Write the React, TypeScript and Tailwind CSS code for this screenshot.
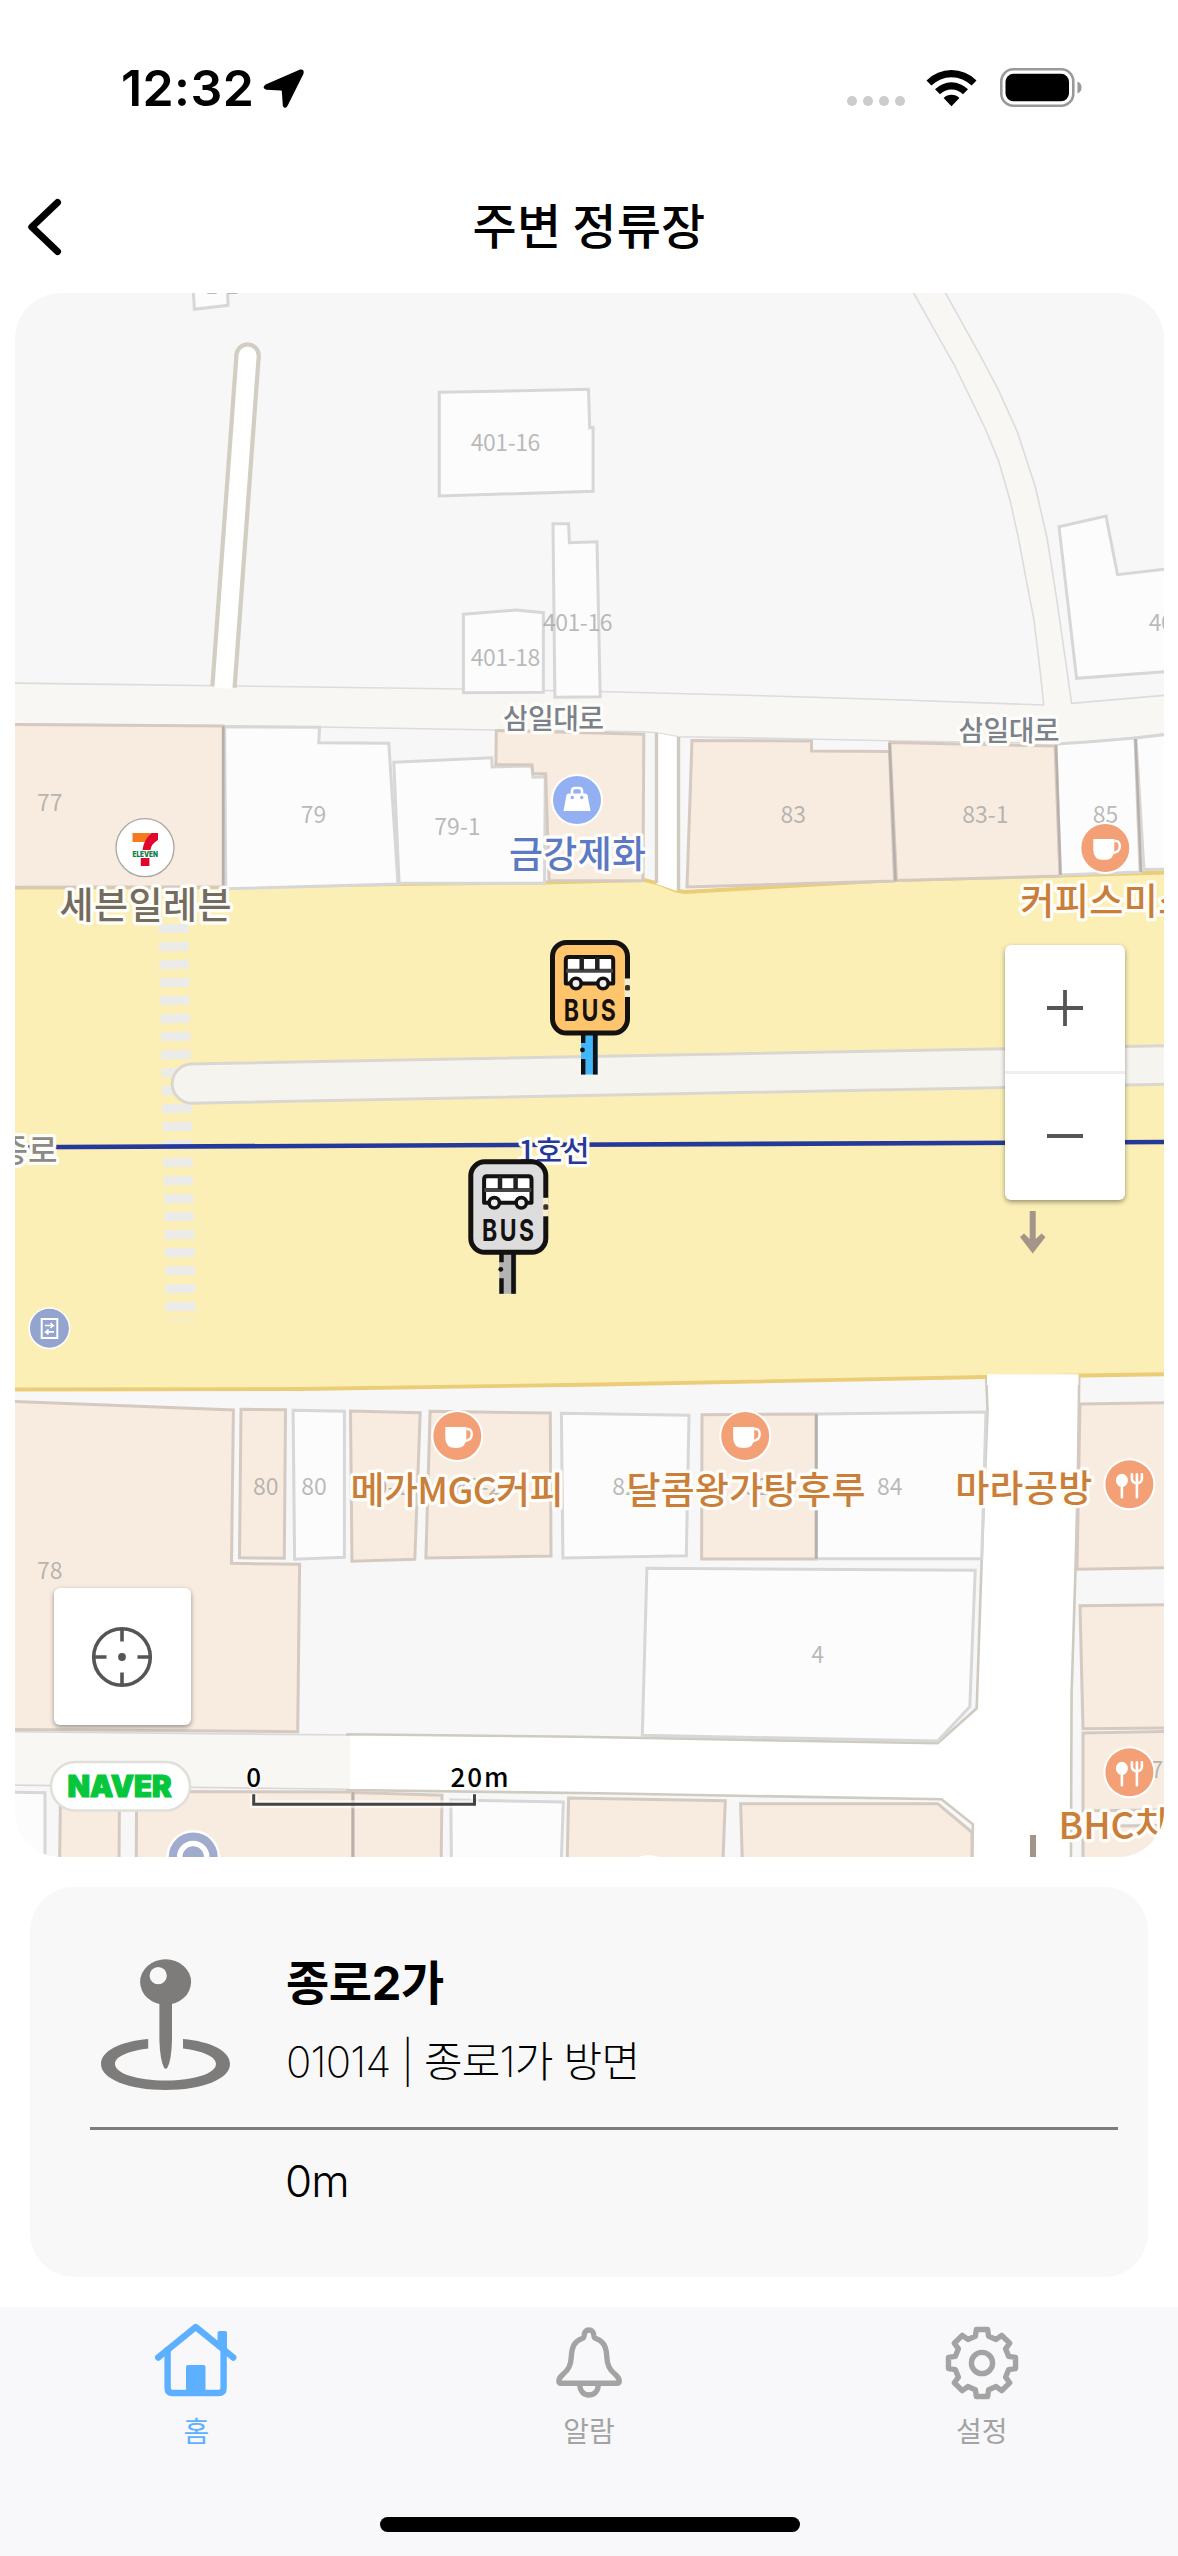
import React from "react";

const KR = '"Noto Sans CJK KR", "Noto Sans", sans-serif';

type LotKind = "shop" | "plain";

const lots: { kind: LotKind; pts: string }[] = [
  { kind: "plain", pts: "193,285 194.4,309.3 228,305.3 227.5,285" },
  { kind: "plain", pts: "439.3,392.3 588.5,389.3 589.7,428 593.1,427.3 593.1,491.3 439.3,496" },
  { kind: "plain", pts: "553,523.7 568.6,523.7 569.4,542.7 597,541.7 600.2,696.7 554.9,697.3" },
  { kind: "plain", pts: "463.4,614.3 516.2,610 543.4,612.7 543.4,692.3 463.4,692.7" },
  { kind: "plain", pts: "1059,526.7 1106,516 1117.5,574.7 1180,567.5 1180,670.5 1076.6,678.3" },
  { kind: "shop", pts: "5,724.5 223.1,726 223.1,886.7 5,887.3" },
  { kind: "plain", pts: "224.6,726.7 319.5,727.3 318.8,742.7 388.8,743.3 398,884 225.8,888.7" },
  { kind: "plain", pts: "393.8,762.3 491.7,757.7 492.1,767 531.9,766 533,777.3 545.3,776.7 544.5,883.3 399.1,883.3" },
  { kind: "shop", pts: "496.3,730.5 643.8,734.3 643,880.7 549.1,880.7 545.7,773.7 533,773.7 531.9,764.7 495.9,764.7" },
  { kind: "shop", pts: "692,740.5 811.5,741 811.5,751 889.5,751.5 894.5,881 687,887" },
  { kind: "shop", pts: "889.9,742.5 1055,746 1060,876 896.5,880.5" },
  { kind: "plain", pts: "1056,744 1086.9,742 1135,738 1140,872 1060.5,875" },
  { kind: "plain", pts: "1136,738 1180,733 1180,869 1144,869.5" },
  { kind: "shop", pts: "5,1401 233.4,1410 231.5,1563.3 299.6,1564.3 297.7,1731.7 5,1729.3" },
  { kind: "shop", pts: "241,1409.3 285.5,1409.7 284.3,1558.3 239.5,1557.7" },
  { kind: "plain", pts: "293.1,1410.3 344.4,1411.3 344.4,1557.3 294.6,1559.3" },
  { kind: "shop", pts: "350.5,1411 420.2,1412.7 414.8,1559.3 352,1561.3" },
  { kind: "shop", pts: "430.1,1411.3 550.3,1413 551,1556 425.9,1558" },
  { kind: "plain", pts: "561.4,1413.3 689,1415.3 686.3,1555.7 562.9,1558" },
  { kind: "shop", pts: "702,1414.7 816,1414 816,1559 701.6,1559" },
  { kind: "plain", pts: "816.5,1414 986,1412 981.7,1558.7 816.5,1558.7" },
  { kind: "plain", pts: "646.9,1568.3 975.2,1570.3 969.8,1706.7 937.7,1741 642.3,1735.3" },
  { kind: "shop", pts: "1080,1404 1180,1402.5 1180,1567.5 1077,1569.3" },
  { kind: "shop", pts: "1080,1605.7 1180,1604.5 1180,1728 1083,1728.7" },
  { kind: "shop", pts: "1083,1733 1180,1731.3 1180,1810 1083,1810.7" },
  { kind: "shop", pts: "1083,1826.5 1180,1825 1180,1870 1083,1870" },
  { kind: "plain", pts: "5,1792 45,1792.7 45,1870 5,1870" },
  { kind: "shop", pts: "60.5,1793 119.5,1793 119,1870 59.5,1870" },
  { kind: "shop", pts: "136.6,1791.5 352.5,1792 352.5,1870 136.2,1870" },
  { kind: "shop", pts: "353,1792.5 442,1795.3 441,1870 353,1870" },
  { kind: "plain", pts: "450.8,1800 563.3,1802 561,1870 451.5,1870" },
  { kind: "shop", pts: "568.6,1798 725.3,1800.7 722.6,1870 567,1870" },
  { kind: "shop", pts: "740.6,1803.7 937.7,1803.7 972,1832.3 972,1870 742.6,1870" },
];

const lotNumbers: [string, number, number][] = [
  ["401-16", 505.5, 442.5],
  ["401-16", 577.7, 622.5],
  ["401-18", 505.5, 658],
  ["401-15", 1183.5, 622.5],
  ["77", 49.7, 802.3],
  ["79", 313.6, 814.3],
  ["79-1", 457.5, 826.3],
  ["83", 793.3, 814.3],
  ["83-1", 985.3, 814.3],
  ["85", 1105.5, 814.3],
  ["80", 265.8, 1486.6],
  ["80", 314, 1486.6],
  ["80-1", 385, 1486.6],
  ["80-2", 478, 1486.6],
  ["82", 625, 1486.6],
  ["82", 757, 1486.6],
  ["84", 889.7, 1486.6],
  ["4", 817.7, 1654.8],
  ["78", 49.7, 1570.8],
  ["7", 1157, 1770],
];

interface LabelProps {
  x: number;
  y: number;
  color: string;
  size?: number;
  width?: number;
  anchor?: "start" | "middle" | "end";
  children: string;
}

/* Place name with a white halo, centred vertically on y. */
function Label({ x, y, color, size = 37, width, anchor = "middle", children }: LabelProps) {
  return (
    <text
      x={x}
      y={y + size * 0.385}
      fontSize={size}
      fontWeight={500}
      textAnchor={anchor}
      textLength={width}
      fill={color}
      stroke="#fffdf9"
      strokeWidth={6.5}
      strokeLinejoin="round"
      paintOrder="stroke"
    >
      {children}
    </text>
  );
}

function CafePoi({ x, y }: { x: number; y: number }) {
  return (
    <g transform={`translate(${x} ${y})`}>
      <circle r="26" fill="#fff" />
      <circle r="24" fill="#f4a077" />
      <path d="M-12-9H9V2Q9 12-1.500 12Q-12 12-12 2Z" fill="#fff" />
      <path d="M9-7h1.500q4 0 4 5.500t-7 6.500" fill="none" stroke="#fff" strokeWidth="2.400" />
    </g>
  );
}

function FoodPoi({ x, y }: { x: number; y: number }) {
  return (
    <g transform={`translate(${x} ${y})`}>
      <circle r="26" fill="#fff" />
      <circle r="24" fill="#f4a077" />
      <ellipse cx="-7.500" cy="-4" rx="6" ry="6.500" fill="#fff" />
      <path
        d="M-7.500 0V13M7.500-3V13M2.500-10V-5Q3.500-1 7.500-1T12.500-5V-10M7.500-10V-2"
        fill="none"
        stroke="#fff"
        strokeWidth="2.600"
        strokeLinecap="round"
      />
    </g>
  );
}

function BusSign({ x, y, plate, pole }: { x: number; y: number; plate: string; pole: string }) {
  return (
    <g transform={`translate(${x} ${y})`}>
      <rect x="31" y="93" width="17" height="41.500" fill={pole} />
      <path d="M45.200 93V134.500" stroke="#111" strokeWidth="4.600" />
      <path d="M33.200 93V103M33.200 119V134.500" stroke="#111" strokeWidth="4.400" />
      <circle cx="32.500" cy="110" r="2.400" fill="#111" />
      <rect x="2.500" y="2.500" width="75" height="90.500" rx="14" fill={plate} stroke="#141210" strokeWidth="5" />
      <rect x="74.500" y="38.500" width="6" height="18.500" fill="#f7eccb" />
      <rect x="75" y="45" width="5" height="5.500" rx="1.500" fill="#38342c" />
      <path
        d="M15.800 43.500V20Q15.800 17 18.800 17H60.200Q63.200 17 63.200 20V43.500Z"
        fill="#fff"
        stroke="#141210"
        strokeWidth="4"
        strokeLinejoin="round"
      />
      <path d="M16 30.800H63" stroke="#444" strokeWidth="4" />
      <path d="M31.700 17V30M47.300 17V30" stroke="#222" strokeWidth="4.500" />
      <circle cx="26" cy="43.500" r="5.200" fill="#eee" stroke="#141210" strokeWidth="3.600" />
      <circle cx="53" cy="43.500" r="5.200" fill="#eee" stroke="#141210" strokeWidth="3.600" />
      <text
        transform="translate(39.800 81.300) scale(0.78 1)"
        textAnchor="middle"
        fontSize="29.500"
        fontWeight="700"
        fontFamily="Inter, sans-serif"
        letterSpacing="3.200"
        dx="1.600"
        fill="#141210"
      >
        BUS
      </text>
    </g>
  );
}

const UPPER_STREET =
  "M5 683L463 689L608 691.700L771 696L903 700L1043.700 705C1041 675 1037 646 1034 620L1026.900 583.300L1018.100 536.700L1010.400 501.700L998.900 461.700L985.900 430L954.900 366L908 283H940L983.600 361.700L998.900 391L1017.300 431.700L1035.300 486.700L1046.800 536.700L1056.300 596.700L1064 650L1071.600 703.300L1180 694V732L1134.800 737.300L1086.900 741.700L1056.300 743.300L890 740.700L772 738.300L678.300 736.700L656.400 732.700L643.800 731.700L496 730L319.500 727L223 725.700L5 723.700Z";

const MAIN_ROAD =
  "M5 887.500L223 887.300L398 884L545 882.500L643.800 880L657.600 883.300L676.300 890.700L685 892L895.600 880L1060 875.700L1180 872V1374L985 1377L600 1384.500L300 1389L5 1389.500Z";

const SIDE_STREET =
  "M985.900 1370L987.500 1410L981.700 1560L976.700 1708.300L937.700 1743.300L578 1736.700L347.500 1734.300V1790L600 1793.300L941.500 1799.300L972.900 1824.300L972 1870H1070.900L1071.600 1693L1075.500 1570L1077.800 1480L1079.300 1370Z";

function StreetMap() {
  return (
    <svg viewBox="15 293 1149 1564" className="block h-[1564px] w-[1149px]" fontFamily={KR}>
      <rect x="15" y="293" width="1149" height="1564" fill="#f7f7f7" />

      <path d={UPPER_STREET} fill="#f8f7f3" stroke="#dcdcdc" strokeWidth="1.600" />
      <path d="M5 1731.700L350 1735V1789.300L5 1785Z" fill="#f8f7f3" stroke="#d9d9d9" strokeWidth="1.600" />
      <path d="M247.600 355.600L223.500 687" stroke="#d3cec4" strokeWidth="26.500" />
      <circle cx="247.600" cy="355.600" r="13.250" fill="#d3cec4" />
      <path d="M247.600 355.600L223.400 688" stroke="#fff" strokeWidth="18" />
      <circle cx="247.600" cy="355.600" r="9" fill="#fff" />

      <path d={SIDE_STREET} fill="#fff" stroke="#d0cbc1" strokeWidth="2.600" />
      <path d="M345 1736V1788.500H352V1736Z" fill="#fff" />
      <path d="M344 1736.500H350V1788H344Z" fill="#f8f7f3" />
      <path d={MAIN_ROAD} fill="#fcefb5" stroke="#ebcd78" strokeWidth="3.800" />
      <path d="M656.500 733V884L677 891V737Z" fill="#fff" />
      <path d="M656.500 733V883M678.500 737V890" stroke="#d0cbc1" strokeWidth="3.400" />
      <path d="M987 1374.300H1078.500V1385H987Z" fill="#fff" />

      {lots.map((lot, i) => (
        <polygon
          key={i}
          points={lot.pts}
          fill={lot.kind === "shop" ? "#f8ece1" : "#fcfcfc"}
          stroke={lot.kind === "shop" ? "#d5cac1" : "#d7d7d7"}
          strokeWidth="3"
        />
      ))}
      <path
        d="M223.300 726V887M816.300 1414V1559M353 1792V1870M889.500 743L895.500 881M1056 745L1060.500 875M1135.500 739L1141 872"
        stroke="#b8b0ab"
        strokeWidth="2.600"
        fill="none"
      />

      <path d="M173.500 924L181 1321" stroke="#ebebea" strokeWidth="29.500" strokeDasharray="9 9" />
      <path d="M1180 1045.400L190.500 1064A19.700 19.700 0 0 0 190.500 1103.300L1180 1084Z" fill="#f5f4ef" stroke="#dad7d1" strokeWidth="3" />
      <path d="M5 1147.300L1180 1142" stroke="#25399b" strokeWidth="4.600" />
      <path d="M1029.700 1211H1035.700V1239L1041.500 1233.500L1045.500 1237L1032.700 1253.500L1020 1237L1024 1233.500L1029.700 1239Z" fill="#a39589" />
      <rect x="1030" y="1835" width="6" height="30" fill="#a39589" />

      <g fontSize="23" textAnchor="middle" fill="#8c8c8c" fillOpacity="0.6">
        {lotNumbers.map(([n, x, y], i) => (
          <text key={i} x={x} y={y + 8.3} textLength={n.length === 6 ? 69.5 : undefined}>
            {n}
          </text>
        ))}
        <text x="222" y="293.500">1-1</text>
      </g>

      <Label x={553.5} y={718} size={28} width={101} color="#7b828b">삼일대로</Label>
      <Label x={1009} y={730.5} size={28} width={101} color="#7b828b">삼일대로</Label>
      <Label x={57.5} y={1149.5} size={32} anchor="end" color="#8a8a86">종로</Label>
      <Label x={554} y={1151} size={29} width={71} color="#25399b">1호선</Label>

      <circle cx="577" cy="800" r="26" fill="#fff" />
      <circle cx="577" cy="800" r="24" fill="#93b1f2" />
      <path d="M566.500 795Q567 793.500 569 793.500H585Q587 793.500 587.500 795L590.500 811H563.500Z" fill="#fff" />
      <path d="M572 796V791Q572 788 575 788H579Q582 788 582 791V796" fill="none" stroke="#fff" strokeWidth="2.600" />
      <circle cx="572.300" cy="797.500" r="1.700" fill="#93b1f2" />
      <circle cx="581.700" cy="797.500" r="1.700" fill="#93b1f2" />
      <Label x={577.5} y={853.5} width={137} color="#5c79c4">금강제화</Label>

      <circle cx="145" cy="847.700" r="29" fill="#fff" stroke="#aaa6a2" strokeWidth="1.300" />
      <path d="M132.500 833H151L145 842H132.500Z" fill="#f47b20" />
      <path d="M158 833H151.500Q144 839 142.500 850H150.500Q151 844 158 840Z" fill="#e3062c" />
      <rect x="140.800" y="858" width="8.600" height="8" fill="#e3062c" />
      <text
        x="132.500"
        y="856.800"
        fontSize="7.500"
        fontWeight="900"
        fontFamily="Inter, sans-serif"
        fill="#12804a"
        textLength="25.500"
        lengthAdjust="spacingAndGlyphs"
      >
        ELEVEN
      </text>
      <Label x={145.5} y={905} width={172} color="#746c5c">세븐일레븐</Label>

      <CafePoi x={1105.3} y={848} />
      <Label x={1106.3} y={901} width={172} color="#c97f3a">커피스미스</Label>
      <CafePoi x={457.3} y={1436} />
      <Label x={457} y={1490} width={213} color="#c97f3a">메가MGC커피</Label>
      <CafePoi x={745.2} y={1436} />
      <Label x={746} y={1490} width={239} color="#c97f3a">달콤왕가탕후루</Label>
      <FoodPoi x={1129.4} y={1484.3} />
      <Label x={1023.8} y={1488} width={137} color="#c97f3a">마라공방</Label>
      <FoodPoi x={1129.4} y={1772.3} />
      <Label x={1058.5} y={1825} anchor="start" color="#c97f3a">BHC치킨</Label>

      <circle cx="49.400" cy="1328.300" r="21" fill="#fff" />
      <circle cx="49.400" cy="1328.300" r="19.500" fill="#93a5ce" />
      <rect x="41.700" y="1319" width="15.600" height="19" fill="none" stroke="#fff" strokeWidth="2" />
      <path
        d="M45 1325.500H53L50.500 1323M53 1325.500L50.500 1328M54 1331.800H46L48.500 1329.300M46 1331.800L48.500 1334.300"
        fill="none"
        stroke="#fff"
        strokeWidth="1.700"
      />

      <circle cx="193.200" cy="1857" r="27" fill="#fff" />
      <circle cx="193.200" cy="1857" r="24.500" fill="#a0acce" />
      <circle cx="193.200" cy="1857" r="13.500" fill="#a0acce" stroke="#fff" strokeWidth="5.500" />
      <circle cx="648.800" cy="1881" r="26" fill="#fff" />

      <BusSign x={550} y={940} plate="#ffc56d" pole="#42b6fb" />
      <BusSign x={468.3} y={1159.3} plate="#dddddd" pole="#b2b2b2" />

      <rect x="51" y="1762" width="139" height="48.500" rx="24.250" fill="#fff" stroke="#e0dfda" strokeWidth="2.600" />
      <text
        x="67.500"
        y="1797.300"
        fontSize="29.500"
        fontWeight="900"
        fontFamily="Inter, sans-serif"
        fill="#06c73c"
        stroke="#06c73c"
        strokeWidth="1.200"
        textLength="104"
        lengthAdjust="spacingAndGlyphs"
      >
        NAVER
      </text>

      <g fontSize="26" fontWeight="500" fill="#000" stroke="#fff" strokeOpacity="0.7" strokeWidth="3" paintOrder="stroke" textAnchor="middle">
        <text x="253.700" y="1787">0</text>
        <text x="479.500" y="1787" textLength="58">20m</text>
      </g>
      <path d="M253.700 1794.300V1804.200H474.500V1794.300" fill="none" stroke="#fff" strokeOpacity="0.6" strokeWidth="8" />
      <path d="M253.700 1794.300V1804.200H474.500V1794.300" fill="none" stroke="#444" strokeWidth="3" />
    </svg>
  );
}

function StatusBar() {
  return (
    <div className="flex h-[159px] shrink-0 items-start justify-between pr-[96px] pl-[121px]">
      <div className="flex items-start">
        <span className="mt-[58px] w-[142px] font-['Inter'] text-[50px] leading-[60px] font-semibold tracking-[0.4px] whitespace-nowrap text-black">
          12:32
        </span>
        <svg viewBox="263 68 42 41" className="mt-[68px] h-[41px] w-[42px]">
          <path
            d="M300.500 70.500Q303.500 70 302.500 73.500L286.800 105Q285 108.500 283.800 105.500L282.800 91Q282.700 89.500 281 89.500L266.500 88.800Q263 87.800 266 85.500Z"
            fill="#000"
            stroke="#000"
            strokeWidth="2"
            strokeLinejoin="round"
          />
        </svg>
      </div>
      <div className="mt-[68px] flex h-[39px] items-start">
        <div className="mt-[28px] mr-[21px] flex gap-[6px]">
          {[0, 1, 2, 3].map((i) => (
            <span key={i} className="h-[10px] w-[10px] rounded-full bg-[#cccccc]" />
          ))}
        </div>
        <svg viewBox="926 68 51 39" className="mr-[23px] h-[39px] w-[51px]">
          <path d="M926.500 80.500A35.300 35.300 0 0 1 976.500 80.500L971.600 85.600A28.300 28.300 0 0 0 931.400 85.600Z" />
          <path d="M935 89.200A23.300 23.300 0 0 1 968 89.200L963 94.200A16.300 16.300 0 0 0 940 94.200Z" />
          <path d="M943.600 98A11.500 11.500 0 0 1 959.400 98L951.500 106.200Z" />
        </svg>
        <svg viewBox="1000 68 82 39" className="h-[39px] w-[82px]">
          <rect x="1001.300" y="69.300" width="72" height="36.400" rx="12" fill="none" stroke="#999" strokeWidth="2.600" />
          <rect x="1005.500" y="73.800" width="63.500" height="27.500" rx="8" fill="#000" />
          <path d="M1077.500 81.500Q1081.500 83 1081.500 87.500T1077.500 93.500Z" fill="#999" />
        </svg>
      </div>
    </div>
  );
}

function NavHeader() {
  return (
    <div className="grid h-[134px] shrink-0 grid-cols-[1fr_auto_1fr] items-center">
      <svg viewBox="26 197 36 60" className="mt-[2px] ml-[26px] h-[60px] w-[36px]">
        <path d="M57.500 202.500L31.800 227L57.500 251.500" fill="none" stroke="#000" strokeWidth="7" strokeLinecap="round" strokeLinejoin="round" />
      </svg>
      <h1 className="-mt-[6px] font-['Noto_Sans_CJK_KR'] text-[48px] leading-[60px] font-medium tracking-[0.2px] whitespace-nowrap text-black">
        주변 정류장
      </h1>
      <span />
    </div>
  );
}

function MapControls() {
  return (
    <>
      <div className="absolute top-[652px] left-[990px] flex h-[255px] w-[120px] flex-col rounded-[6px] bg-white shadow-[0_2px_5px_rgba(0,0,0,0.4)]">
        <button className="flex h-[129px] items-center justify-center border-b-[3px] border-[#eeeeee]" aria-label="확대">
          <svg viewBox="0 0 36 36" className="h-[36px] w-[36px]">
            <path d="M0 18H36M18 0V36" stroke="#555" strokeWidth="3.800" />
          </svg>
        </button>
        <button className="flex flex-1 items-center justify-center" aria-label="축소">
          <svg viewBox="0 0 36 36" className="-mt-[2px] h-[36px] w-[36px]">
            <path d="M0 18H36" stroke="#555" strokeWidth="3.800" />
          </svg>
        </button>
      </div>
      <button
        className="absolute top-[1295px] left-[39px] flex h-[137px] w-[137px] items-center justify-center rounded-[6px] bg-white shadow-[0_2px_5px_rgba(0,0,0,0.4)]"
        aria-label="현재 위치"
      >
        <svg viewBox="0 0 62 62" className="mr-px h-[62px] w-[62px]">
          <circle cx="31" cy="31" r="28.300" fill="none" stroke="#555" strokeWidth="3.600" />
          <circle cx="31" cy="31" r="3.900" fill="#555" />
          <path d="M31 3V15.500M31 46.500V59M3 31H15.500M46.500 31H59" stroke="#555" strokeWidth="3.600" />
        </svg>
      </button>
    </>
  );
}

function StopCard() {
  return (
    <section className="mx-[30px] mt-[30px] flex h-[390px] shrink-0 flex-col rounded-[44px] bg-[#f8f8f8] pr-[30px] pl-[60px]">
      <div className="flex h-[240px] items-start">
        <svg viewBox="100 1958 132 134" className="mt-[71px] ml-[10px] h-[134px] w-[132px]" fill="#7d7c7a">
          <ellipse cx="165.600" cy="1982" rx="25.500" ry="22.700" />
          <circle cx="158.200" cy="1975.700" r="8.600" fill="#f8f8f8" />
          <path d="M159.400 2000H172V2040Q171.500 2060 167.500 2067.500Q165.700 2070 164 2067.500Q160 2060 159.400 2040Z" />
          <path d="M148.200 2039C120 2041.500 101 2051 101 2064C101 2079 129 2090 165.600 2090S230 2079 230 2064C230 2051 211 2041.500 183 2039V2048.500C203 2051 216 2056.500 216 2064C216 2073.500 194 2080.500 165.600 2080.500S115 2073.500 115 2064C115 2056.500 128 2051 148.200 2048.500Z" />
        </svg>
        <div className="mt-[62px] ml-[54px] flex flex-col font-['Inter','Noto_Sans_CJK_KR',sans-serif] whitespace-nowrap text-black">
          <strong className="text-[47px] leading-[68px] font-bold tracking-[-0.4px]">종로2가</strong>
          <span className="mt-[11px] text-[42px] leading-[68px] font-extralight tracking-[-0.8px]">01014 | 종로1가 방면</span>
        </div>
      </div>
      <div className="h-[3px] bg-[#7d7d7d]" />
      <p className="mt-[19px] ml-[195px] font-['Inter','Noto_Sans_CJK_KR',sans-serif] text-[44px] leading-[64px] font-light tracking-[-1px] text-black">
        0m
      </p>
    </section>
  );
}

const gearPath = (() => {
  const at = (deg: number, r: number) => {
    const a = ((deg - 90) * Math.PI) / 180;
    return `${(38 + r * Math.cos(a)).toFixed(2)} ${(38 + r * Math.sin(a)).toFixed(2)}`;
  };
  const pts: string[] = [];
  for (let k = 0; k < 8; k++) {
    const c = k * 45;
    pts.push(at(c - 14, 27.5), at(c - 9.5, 34), at(c + 9.5, 34), at(c + 14, 27.5));
  }
  return `M${pts.join("L")}Z`;
})();

function TabBar() {
  return (
    <nav className="flex h-[249px] shrink-0 flex-col items-center bg-[#f8f8fa] font-['Noto_Sans_CJK_KR'] text-[28px] leading-[36px]">
      <div className="grid h-[210px] w-full grid-cols-3">
        <a className="flex flex-col items-center text-[#5cb0ff]">
          <svg
            viewBox="153 2320 86 82"
            className="mt-[13px] h-[82px] w-[86px]"
            fill="none"
            stroke="#5cb0ff"
            strokeWidth="6.400"
            strokeLinecap="round"
            strokeLinejoin="round"
          >
            <path d="M158.200 2357.500L195.700 2327L233.300 2357.500" />
            <path d="M167.600 2350V2388Q167.600 2393 172.600 2393H218.600Q223.600 2393 223.600 2388V2350" />
            <path d="M217.500 2333Q217.500 2331 219.500 2331H225Q227 2331 227 2333V2352L217.500 2344Z" fill="#5cb0ff" stroke="none" />
            <path d="M186 2367Q186 2365 188 2365H203.500Q205.500 2365 205.500 2367V2394H186Z" fill="#5cb0ff" stroke="none" />
          </svg>
          <span className="mt-[10px]">홈</span>
        </a>
        <a className="flex flex-col items-center text-[#a3a3a3]">
          <svg
            viewBox="544.200 2320 86 82"
            className="mt-[13px] h-[82px] w-[86px]"
            fill="none"
            stroke="#a3a3a3"
            strokeWidth="5.400"
            strokeLinejoin="round"
          >
            <path d="M559 2383.300Q556.500 2383.300 557.300 2379.500Q558 2377 562 2373.500Q569 2368 569.500 2357C570 2346 573 2341 580.500 2338.500Q582 2338 582.200 2336C582.500 2332 584.500 2330 587.200 2330S592 2332 592.200 2336Q592.400 2338 594 2338.500C601.500 2341 604.500 2346 605 2357Q605.500 2368 612.500 2373.500Q616.500 2377 617.200 2379.500Q618 2383.300 615.500 2383.300Z" />
            <path d="M578 2384C578 2391 582 2395 587.200 2395S596.500 2391 596.500 2384" />
          </svg>
          <span className="mt-[10px]">알람</span>
        </a>
        <a className="flex flex-col items-center text-[#a3a3a3]">
          <svg viewBox="0 0 76 76" className="mt-[18px] h-[76px] w-[76px]" fill="none" stroke="#a3a3a3" strokeWidth="5.400" strokeLinejoin="round">
            <path d={gearPath} />
            <circle cx="38" cy="38" r="10.600" />
          </svg>
          <span className="mt-[11px]">설정</span>
        </a>
      </div>
      <div className="ml-[2px] h-[15px] w-[420px] rounded-full bg-black" />
    </nav>
  );
}

export default function App() {
  return (
    <div className="flex h-[2556px] w-[1178px] flex-col overflow-hidden bg-white">
      <StatusBar />
      <NavHeader />
      <main className="relative ml-[15px] h-[1564px] w-[1149px] shrink-0 overflow-hidden rounded-[46px]">
        <StreetMap />
        <MapControls />
      </main>
      <StopCard />
      <div className="h-[30px] shrink-0" />
      <TabBar />
    </div>
  );
}
